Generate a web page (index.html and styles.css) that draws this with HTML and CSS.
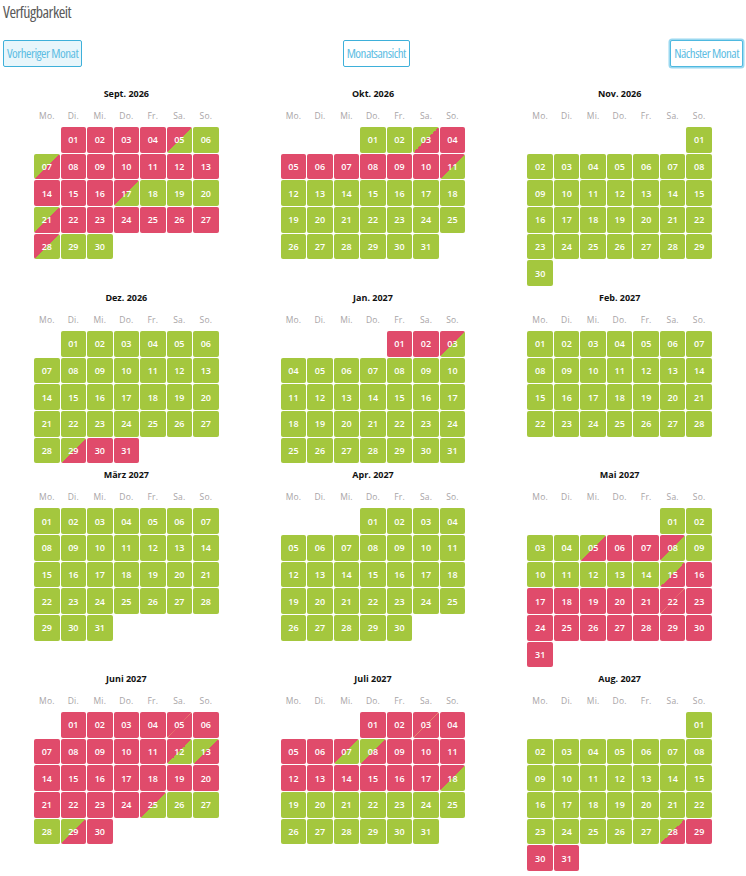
FILE: index.html
```html
<!DOCTYPE html>
<html lang="de">
<head>
<meta charset="utf-8">
<title>Verfügbarkeit</title>
<link rel="stylesheet" href="styles.css">
</head>
<body>
<div class="page">
  <h1 class="title">Verfügbarkeit</h1>
  <div class="nav">
    <button class="btn prev">Vorheriger Monat</button>
    <button class="btn">Monatsansicht</button>
    <button class="btn next">Nächster Monat</button>
  </div>
  <div class="months">

    <section class="month">
      <div class="mtitle">Sept. 2026</div>
      <div class="wd"><span>Mo.</span><span>Di.</span><span>Mi.</span><span>Do.</span><span>Fr.</span><span>Sa.</span><span>So.</span></div>
      <div class="days">
        <span class="d r o1">01</span><span class="d r">02</span><span class="d r">03</span><span class="d r">04</span><span class="d e">05</span><span class="d g">06</span>
        <span class="d s">07</span><span class="d r">08</span><span class="d r">09</span><span class="d r">10</span><span class="d r">11</span><span class="d r">12</span><span class="d r">13</span>
        <span class="d r">14</span><span class="d r">15</span><span class="d r">16</span><span class="d e">17</span><span class="d g">18</span><span class="d g">19</span><span class="d g">20</span>
        <span class="d s">21</span><span class="d r">22</span><span class="d r">23</span><span class="d r">24</span><span class="d r">25</span><span class="d r">26</span><span class="d r">27</span>
        <span class="d e">28</span><span class="d g">29</span><span class="d g">30</span>
      </div>
    </section>

    <section class="month">
      <div class="mtitle">Okt. 2026</div>
      <div class="wd"><span>Mo.</span><span>Di.</span><span>Mi.</span><span>Do.</span><span>Fr.</span><span>Sa.</span><span>So.</span></div>
      <div class="days">
        <span class="d g o3">01</span><span class="d g">02</span><span class="d s">03</span><span class="d r">04</span>
        <span class="d r">05</span><span class="d r">06</span><span class="d r">07</span><span class="d r">08</span><span class="d r">09</span><span class="d r">10</span><span class="d e">11</span>
        <span class="d g">12</span><span class="d g">13</span><span class="d g">14</span><span class="d g">15</span><span class="d g">16</span><span class="d g">17</span><span class="d g">18</span>
        <span class="d g">19</span><span class="d g">20</span><span class="d g">21</span><span class="d g">22</span><span class="d g">23</span><span class="d g">24</span><span class="d g">25</span>
        <span class="d g">26</span><span class="d g">27</span><span class="d g">28</span><span class="d g">29</span><span class="d g">30</span><span class="d g">31</span>
      </div>
    </section>

    <section class="month">
      <div class="mtitle">Nov. 2026</div>
      <div class="wd"><span>Mo.</span><span>Di.</span><span>Mi.</span><span>Do.</span><span>Fr.</span><span>Sa.</span><span>So.</span></div>
      <div class="days">
        <span class="d g o6">01</span>
        <span class="d g">02</span><span class="d g">03</span><span class="d g">04</span><span class="d g">05</span><span class="d g">06</span><span class="d g">07</span><span class="d g">08</span>
        <span class="d g">09</span><span class="d g">10</span><span class="d g">11</span><span class="d g">12</span><span class="d g">13</span><span class="d g">14</span><span class="d g">15</span>
        <span class="d g">16</span><span class="d g">17</span><span class="d g">18</span><span class="d g">19</span><span class="d g">20</span><span class="d g">21</span><span class="d g">22</span>
        <span class="d g">23</span><span class="d g">24</span><span class="d g">25</span><span class="d g">26</span><span class="d g">27</span><span class="d g">28</span><span class="d g">29</span>
        <span class="d g">30</span>
      </div>
    </section>

    <section class="month">
      <div class="mtitle">Dez. 2026</div>
      <div class="wd"><span>Mo.</span><span>Di.</span><span>Mi.</span><span>Do.</span><span>Fr.</span><span>Sa.</span><span>So.</span></div>
      <div class="days">
        <span class="d g o1">01</span><span class="d g">02</span><span class="d g">03</span><span class="d g">04</span><span class="d g">05</span><span class="d g">06</span>
        <span class="d g">07</span><span class="d g">08</span><span class="d g">09</span><span class="d g">10</span><span class="d g">11</span><span class="d g">12</span><span class="d g">13</span>
        <span class="d g">14</span><span class="d g">15</span><span class="d g">16</span><span class="d g">17</span><span class="d g">18</span><span class="d g">19</span><span class="d g">20</span>
        <span class="d g">21</span><span class="d g">22</span><span class="d g">23</span><span class="d g">24</span><span class="d g">25</span><span class="d g">26</span><span class="d g">27</span>
        <span class="d g">28</span><span class="d s">29</span><span class="d r">30</span><span class="d r">31</span>
      </div>
    </section>

    <section class="month">
      <div class="mtitle">Jan. 2027</div>
      <div class="wd"><span>Mo.</span><span>Di.</span><span>Mi.</span><span>Do.</span><span>Fr.</span><span>Sa.</span><span>So.</span></div>
      <div class="days">
        <span class="d r o4">01</span><span class="d r">02</span><span class="d e">03</span>
        <span class="d g">04</span><span class="d g">05</span><span class="d g">06</span><span class="d g">07</span><span class="d g">08</span><span class="d g">09</span><span class="d g">10</span>
        <span class="d g">11</span><span class="d g">12</span><span class="d g">13</span><span class="d g">14</span><span class="d g">15</span><span class="d g">16</span><span class="d g">17</span>
        <span class="d g">18</span><span class="d g">19</span><span class="d g">20</span><span class="d g">21</span><span class="d g">22</span><span class="d g">23</span><span class="d g">24</span>
        <span class="d g">25</span><span class="d g">26</span><span class="d g">27</span><span class="d g">28</span><span class="d g">29</span><span class="d g">30</span><span class="d g">31</span>
      </div>
    </section>

    <section class="month">
      <div class="mtitle">Feb. 2027</div>
      <div class="wd"><span>Mo.</span><span>Di.</span><span>Mi.</span><span>Do.</span><span>Fr.</span><span>Sa.</span><span>So.</span></div>
      <div class="days">
        <span class="d g">01</span><span class="d g">02</span><span class="d g">03</span><span class="d g">04</span><span class="d g">05</span><span class="d g">06</span><span class="d g">07</span>
        <span class="d g">08</span><span class="d g">09</span><span class="d g">10</span><span class="d g">11</span><span class="d g">12</span><span class="d g">13</span><span class="d g">14</span>
        <span class="d g">15</span><span class="d g">16</span><span class="d g">17</span><span class="d g">18</span><span class="d g">19</span><span class="d g">20</span><span class="d g">21</span>
        <span class="d g">22</span><span class="d g">23</span><span class="d g">24</span><span class="d g">25</span><span class="d g">26</span><span class="d g">27</span><span class="d g">28</span>
      </div>
    </section>

    <section class="month">
      <div class="mtitle">März 2027</div>
      <div class="wd"><span>Mo.</span><span>Di.</span><span>Mi.</span><span>Do.</span><span>Fr.</span><span>Sa.</span><span>So.</span></div>
      <div class="days">
        <span class="d g">01</span><span class="d g">02</span><span class="d g">03</span><span class="d g">04</span><span class="d g">05</span><span class="d g">06</span><span class="d g">07</span>
        <span class="d g">08</span><span class="d g">09</span><span class="d g">10</span><span class="d g">11</span><span class="d g">12</span><span class="d g">13</span><span class="d g">14</span>
        <span class="d g">15</span><span class="d g">16</span><span class="d g">17</span><span class="d g">18</span><span class="d g">19</span><span class="d g">20</span><span class="d g">21</span>
        <span class="d g">22</span><span class="d g">23</span><span class="d g">24</span><span class="d g">25</span><span class="d g">26</span><span class="d g">27</span><span class="d g">28</span>
        <span class="d g">29</span><span class="d g">30</span><span class="d g">31</span>
      </div>
    </section>

    <section class="month">
      <div class="mtitle">Apr. 2027</div>
      <div class="wd"><span>Mo.</span><span>Di.</span><span>Mi.</span><span>Do.</span><span>Fr.</span><span>Sa.</span><span>So.</span></div>
      <div class="days">
        <span class="d g o3">01</span><span class="d g">02</span><span class="d g">03</span><span class="d g">04</span>
        <span class="d g">05</span><span class="d g">06</span><span class="d g">07</span><span class="d g">08</span><span class="d g">09</span><span class="d g">10</span><span class="d g">11</span>
        <span class="d g">12</span><span class="d g">13</span><span class="d g">14</span><span class="d g">15</span><span class="d g">16</span><span class="d g">17</span><span class="d g">18</span>
        <span class="d g">19</span><span class="d g">20</span><span class="d g">21</span><span class="d g">22</span><span class="d g">23</span><span class="d g">24</span><span class="d g">25</span>
        <span class="d g">26</span><span class="d g">27</span><span class="d g">28</span><span class="d g">29</span><span class="d g">30</span>
      </div>
    </section>

    <section class="month">
      <div class="mtitle">Mai 2027</div>
      <div class="wd"><span>Mo.</span><span>Di.</span><span>Mi.</span><span>Do.</span><span>Fr.</span><span>Sa.</span><span>So.</span></div>
      <div class="days">
        <span class="d g o5">01</span><span class="d g">02</span>
        <span class="d g">03</span><span class="d g">04</span><span class="d s">05</span><span class="d r">06</span><span class="d r">07</span><span class="d e">08</span><span class="d g">09</span>
        <span class="d g">10</span><span class="d g">11</span><span class="d g">12</span><span class="d g">13</span><span class="d g">14</span><span class="d s">15</span><span class="d r">16</span>
        <span class="d r">17</span><span class="d r">18</span><span class="d r">19</span><span class="d r">20</span><span class="d r">21</span><span class="d x">22</span><span class="d r">23</span>
        <span class="d r">24</span><span class="d r">25</span><span class="d r">26</span><span class="d r">27</span><span class="d r">28</span><span class="d r">29</span><span class="d r">30</span>
        <span class="d r">31</span>
      </div>
    </section>

    <section class="month">
      <div class="mtitle">Juni 2027</div>
      <div class="wd"><span>Mo.</span><span>Di.</span><span>Mi.</span><span>Do.</span><span>Fr.</span><span>Sa.</span><span>So.</span></div>
      <div class="days">
        <span class="d r o1">01</span><span class="d r">02</span><span class="d r">03</span><span class="d r">04</span><span class="d x">05</span><span class="d r">06</span>
        <span class="d r">07</span><span class="d r">08</span><span class="d r">09</span><span class="d r">10</span><span class="d r">11</span><span class="d e">12</span><span class="d s">13</span>
        <span class="d r">14</span><span class="d r">15</span><span class="d r">16</span><span class="d r">17</span><span class="d r">18</span><span class="d r">19</span><span class="d r">20</span>
        <span class="d r">21</span><span class="d r">22</span><span class="d r">23</span><span class="d r">24</span><span class="d e">25</span><span class="d g">26</span><span class="d g">27</span>
        <span class="d g">28</span><span class="d s">29</span><span class="d r">30</span>
      </div>
    </section>

    <section class="month">
      <div class="mtitle">Juli 2027</div>
      <div class="wd"><span>Mo.</span><span>Di.</span><span>Mi.</span><span>Do.</span><span>Fr.</span><span>Sa.</span><span>So.</span></div>
      <div class="days">
        <span class="d r o3">01</span><span class="d r">02</span><span class="d x">03</span><span class="d r">04</span>
        <span class="d r">05</span><span class="d r">06</span><span class="d e">07</span><span class="d s">08</span><span class="d r">09</span><span class="d r">10</span><span class="d r">11</span>
        <span class="d r">12</span><span class="d r">13</span><span class="d r">14</span><span class="d r">15</span><span class="d r">16</span><span class="d r">17</span><span class="d e">18</span>
        <span class="d g">19</span><span class="d g">20</span><span class="d g">21</span><span class="d g">22</span><span class="d g">23</span><span class="d g">24</span><span class="d g">25</span>
        <span class="d g">26</span><span class="d g">27</span><span class="d g">28</span><span class="d g">29</span><span class="d g">30</span><span class="d g">31</span>
      </div>
    </section>

    <section class="month">
      <div class="mtitle">Aug. 2027</div>
      <div class="wd"><span>Mo.</span><span>Di.</span><span>Mi.</span><span>Do.</span><span>Fr.</span><span>Sa.</span><span>So.</span></div>
      <div class="days">
        <span class="d g o6">01</span>
        <span class="d g">02</span><span class="d g">03</span><span class="d g">04</span><span class="d g">05</span><span class="d g">06</span><span class="d g">07</span><span class="d g">08</span>
        <span class="d g">09</span><span class="d g">10</span><span class="d g">11</span><span class="d g">12</span><span class="d g">13</span><span class="d g">14</span><span class="d g">15</span>
        <span class="d g">16</span><span class="d g">17</span><span class="d g">18</span><span class="d g">19</span><span class="d g">20</span><span class="d g">21</span><span class="d g">22</span>
        <span class="d g">23</span><span class="d g">24</span><span class="d g">25</span><span class="d g">26</span><span class="d g">27</span><span class="d s">28</span><span class="d r">29</span>
        <span class="d r">30</span><span class="d r">31</span>
      </div>
    </section>

  </div>
</div>
</body>
</html>
```

FILE: styles.css
```css
* {
  box-sizing: border-box;
}

body {
  margin: 0;
  background: #fff;
  font-family: "Open Sans", "DejaVu Sans", sans-serif;
}

.page {
  padding: 0 3px;
}

.title {
  margin: 0;
  font-family: "Open Sans", "DejaVu Sans Condensed", sans-serif;
  font-stretch: 75%;
  font-weight: 400;
  font-size: 16px;
  line-height: 24px;
  letter-spacing: -0.5px;
  color: #5a5a5a;
}

.nav {
  display: flex;
  justify-content: space-between;
  align-items: flex-start;
  margin-top: 16px;
}

.btn {
  height: 27px;
  margin: 0;
  padding: 0 3px;
  border: 1px solid #3eb0da;
  border-radius: 2px;
  background: #fff;
  color: #5dbde3;
  font-family: "Open Sans", "DejaVu Sans Condensed", sans-serif;
  font-stretch: 75%;
  font-size: 13px;
  line-height: 25px;
  letter-spacing: -0.5px;
}

.btn.prev {
  background: #e8f6fb;
}

.btn.next {
  border-color: #4fb9e0;
  box-shadow: 0 0 0 1.5px #9ad8f0;
}

.months {
  display: grid;
  grid-template-columns: repeat(3, 1fr);
  row-gap: 5px;
  margin-top: 20px;
}

.month {
  display: flex;
  flex-direction: column;
  align-items: center;
}

.mtitle {
  font-size: 9px;
  font-weight: 700;
  line-height: 14px;
  color: #111;
}

.wd {
  display: grid;
  grid-template-columns: repeat(7, 25.5px);
  column-gap: 1px;
  margin-top: 9px;
  font-size: 8.5px;
  line-height: 12px;
  letter-spacing: 0.2px;
  color: #a8a4a6;
  text-align: center;
}

.days {
  display: grid;
  grid-template-columns: repeat(7, 25.5px);
  grid-auto-rows: 25.67px;
  gap: 1px;
  margin-top: 5px;
}

.d {
  display: flex;
  align-items: center;
  justify-content: center;
  border-radius: 2px;
  color: #fff;
  font-size: 9px;
  font-weight: 600;
}

.g {
  background: #a4c73e;
}

.r {
  background: #e04b6b;
}

.e {
  background: linear-gradient(to bottom right, #e04b6b 50%, #a4c73e 50%);
}

.s {
  background: linear-gradient(to bottom right, #a4c73e 50%, #e04b6b 50%);
}

.x {
  background: linear-gradient(to bottom right, #e04b6b calc(50% - 0.4px), #e9866f 50%, #e04b6b calc(50% + 0.4px));
}

.o1 { grid-column-start: 2; }
.o3 { grid-column-start: 4; }
.o4 { grid-column-start: 5; }
.o5 { grid-column-start: 6; }
.o6 { grid-column-start: 7; }
```
